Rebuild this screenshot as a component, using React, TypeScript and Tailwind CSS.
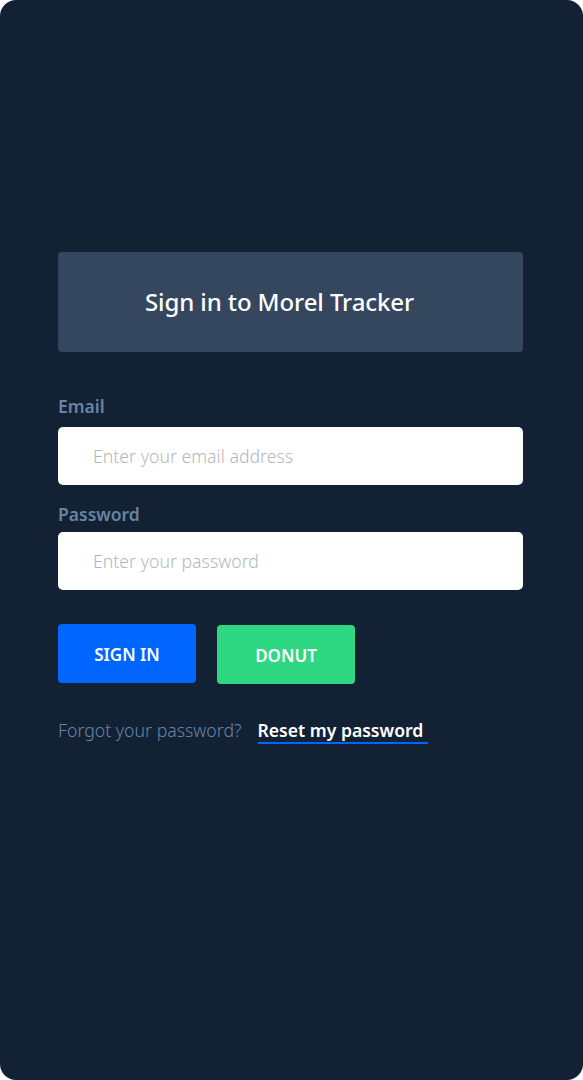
import React from "react";

export default function App() {
  const font = { fontFamily: '"Noto Sans", "Open Sans", sans-serif' };
  return (
    <div className="bg-white">
      <div
        className="w-[583px] h-[1080px] bg-[#132135] rounded-[16px] pl-[58px] pr-[60px] pt-[252px]"
        style={font}
      >
        <div className="h-[100px] bg-[#34475e] rounded-[4px] flex items-center justify-center pr-[22px]">
          <h1 className="text-white text-[24px] font-medium tracking-[-0.1px]">Sign in to Morel Tracker</h1>
        </div>
        <div className="mt-[42px] text-[#6a83a3] text-[17.5px] font-semibold leading-[24px]">Email</div>
        <div className="mt-[9px] h-[58px] bg-white rounded-[5px] flex items-center pl-[35px]">
          <span className="text-[#b5b7ba] text-[17.7px] font-light">Enter your email address</span>
        </div>
        <div className="mt-[17px] text-[#6a83a3] text-[17.5px] font-semibold leading-[24px]">Password</div>
        <div className="mt-[6px] h-[58px] bg-white rounded-[5px] flex items-center pl-[35px]">
          <span className="text-[#b5b7ba] text-[17.7px] font-light">Enter your password</span>
        </div>
        <div className="mt-[34px] flex gap-[21px] items-start">
          <button className="w-[138px] h-[59px] pt-[2px] bg-[#0066ff] rounded-[4px] text-white text-[17px] font-semibold">SIGN IN</button>
          <button className="mt-[1px] w-[138px] h-[59px] pt-[2px] bg-[#2ed882] rounded-[4px] text-white text-[17px] font-semibold">DONUT</button>
        </div>
        <div className="mt-[33px] flex items-baseline">
          <span className="text-[#6a83a3] text-[17.7px] font-light">Forgot your password?</span>
          <span className="ml-[16px] pr-[5px] text-white text-[17.6px] font-semibold border-b-2 border-[#0066ff] leading-[23px]">Reset my password</span>
        </div>
      </div>
    </div>
  );
}
